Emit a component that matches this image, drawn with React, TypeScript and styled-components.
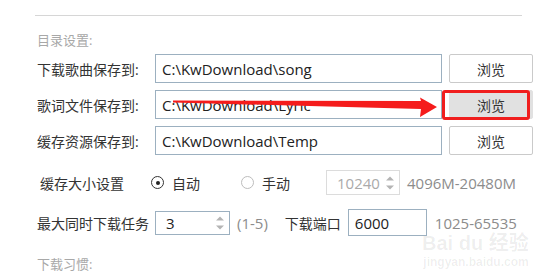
import React from "react";
import styled, { createGlobalStyle } from "styled-components";

const GlobalStyle = createGlobalStyle`
  html, body {
    margin: 0;
    padding: 0;
    background: #ffffff;
  }
  body {
    font-family: "Open Sans", "Noto Sans CJK SC", sans-serif;
    color: #333333;
  }
`;

const Page = styled.div`
  position: relative;
  width: 545px;
  height: 279px;
  overflow: hidden;
  padding-top: 15px;
  box-sizing: border-box;
`;

const Divider = styled.div`
  margin-left: 35px;
  width: 487px;
  height: 1px;
  background: #d6d6d6;
`;

const SectionTitle = styled.div<{ $top: number }>`
  margin: ${(p) => p.$top}px 0 0 37px;
  height: 20px;
  line-height: 20px;
  font-size: 13px;
  color: #a8a8a8;
`;

const Rows = styled.div`
  display: flex;
  flex-direction: column;
  gap: 7px;
  margin: 4px 0 0 37px;
`;

const Row = styled.div<{ $h: number; $top?: number; $indent?: number }>`
  display: flex;
  align-items: center;
  height: ${(p) => p.$h}px;
  margin-top: ${(p) => p.$top ?? 0}px;
  padding-left: ${(p) => p.$indent ?? 0}px;
`;

const Label = styled.span<{ $w?: number; $ml?: number }>`
  width: ${(p) => (p.$w ? `${p.$w}px` : "auto")};
  margin-left: ${(p) => p.$ml ?? 0}px;
  flex-shrink: 0;
  font-size: 14px;
  white-space: nowrap;
  color: #333333;
`;

const PathInput = styled.div`
  box-sizing: border-box;
  width: 287px;
  height: 29px;
  border: 1px solid #9cb0c0;
  padding-left: 6px;
  display: flex;
  align-items: center;
  font-size: 15px;
  color: #222222;
  white-space: nowrap;
`;

const BrowseButton = styled.div<{ $pressed?: boolean }>`
  box-sizing: border-box;
  width: 84px;
  height: 29px;
  margin-left: 7px;
  border: 1px solid ${(p) => (p.$pressed ? "#e1e1e1" : "#cacaca")};
  border-radius: 2px;
  background: ${(p) => (p.$pressed ? "#e1e1e1" : "#ffffff")};
  display: flex;
  align-items: center;
  justify-content: center;
  font-size: 14px;
  color: #333333;
`;

const Radio = styled.span<{ $checked?: boolean }>`
  box-sizing: border-box;
  width: 13px;
  height: 13px;
  border-radius: 50%;
  border: 1px solid ${(p) => (p.$checked ? "#333333" : "#bdbdbd")};
  display: flex;
  align-items: center;
  justify-content: center;
  margin-right: 8px;
  &::after {
    content: "";
    width: 4px;
    height: 4px;
    border-radius: 50%;
    background: ${(p) => (p.$checked ? "#222222" : "transparent")};
  }
`;

const Option = styled.span<{ $w: number }>`
  display: flex;
  align-items: center;
  width: ${(p) => p.$w}px;
  font-size: 14px;
`;

const SpinBox = styled.div<{ $w: number; $h: number; $disabled?: boolean }>`
  box-sizing: border-box;
  position: relative;
  width: ${(p) => p.$w}px;
  height: ${(p) => p.$h}px;
  border: 1px solid ${(p) => (p.$disabled ? "#dcdcdc" : "#9cb0c0")};
  display: flex;
  align-items: center;
  padding-left: 10px;
  font-size: 15px;
  color: ${(p) => (p.$disabled ? "#aaaaaa" : "#222222")};
`;

const Arrows = styled.span`
  position: absolute;
  right: 5px;
  top: 50%;
  transform: translateY(-50%);
  display: flex;
  flex-direction: column;
  gap: 5px;
`;

const Tri = styled.span<{ $down?: boolean }>`
  width: 0;
  height: 0;
  border-left: 4px solid transparent;
  border-right: 4px solid transparent;
  ${(p) =>
    p.$down
      ? "border-top: 4px solid #b4b4b4;"
      : "border-bottom: 4px solid #b4b4b4;"}
`;

const Hint = styled.span<{ $gap: number }>`
  margin-left: ${(p) => p.$gap}px;
  font-size: 15px;
  color: #8c8c8c;
  white-space: nowrap;
`;

const TextBox = styled.div`
  box-sizing: border-box;
  width: 79px;
  height: 27px;
  margin-left: 7px;
  border: 1px solid #9cb0c0;
  padding-left: 6px;
  display: flex;
  align-items: center;
  font-size: 15px;
  color: #222222;
`;

const Highlight = styled.div`
  position: absolute;
  left: 442px;
  top: 90px;
  width: 88px;
  height: 30px;
  box-sizing: border-box;
  border: 3px solid #f01e1e;
  border-radius: 3px;
`;

const Arrow = styled.svg`
  position: absolute;
  left: 0;
  top: 0;
  pointer-events: none;
`;

const Watermark = styled.div`
  position: absolute;
  left: 422px;
  top: 232px;
  display: flex;
  flex-direction: column;
  align-items: flex-end;
  white-space: nowrap;
  color: rgba(0, 0, 0, 0.07);
  font-family: "Liberation Sans", "Noto Sans CJK SC", sans-serif;
  font-weight: bold;
`;

const MarkBig = styled.span`
  font-size: 20px;
  line-height: 22px;
`;

const MarkSmall = styled.span`
  font-size: 12px;
  line-height: 16px;
`;

function SpinArrows() {
  return (
    <Arrows>
      <Tri />
      <Tri $down />
    </Arrows>
  );
}

export default function App() {
  return (
    <Page>
      <GlobalStyle />
      <Divider />
      <SectionTitle $top={14}>目录设置:</SectionTitle>
      <Rows>
        <Row $h={29}>
          <Label $w={118}>下载歌曲保存到:</Label>
          <PathInput>C:\KwDownload\song</PathInput>
          <BrowseButton>浏览</BrowseButton>
        </Row>
        <Row $h={29}>
          <Label $w={118}>歌词文件保存到:</Label>
          <PathInput>C:\KwDownload\Lyric</PathInput>
          <BrowseButton $pressed>浏览</BrowseButton>
        </Row>
        <Row $h={29}>
          <Label $w={118}>缓存资源保存到:</Label>
          <PathInput>C:\KwDownload\Temp</PathInput>
          <BrowseButton>浏览</BrowseButton>
        </Row>
        <Row $h={25} $top={8} $indent={3}>
          <Label $w={111}>缓存大小设置</Label>
          <Option $w={90}>
            <Radio $checked />
            自动
          </Option>
          <Option $w={85}>
            <Radio />
            手动
          </Option>
          <SpinBox $w={74} $h={25} $disabled>
            10240
            <SpinArrows />
          </SpinBox>
          <Hint $gap={7}>4096M-20480M</Hint>
        </Row>
        <Row $h={27} $top={7}>
          <Label $w={118}>最大同时下载任务</Label>
          <SpinBox $w={75} $h={24}>
            3
            <SpinArrows />
          </SpinBox>
          <Hint $gap={7}>(1-5)</Hint>
          <Label $ml={17}>下载端口</Label>
          <TextBox>6000</TextBox>
          <Hint $gap={8}>1025-65535</Hint>
        </Row>
      </Rows>
      <SectionTitle $top={18}>下载习惯:</SectionTitle>
      <Highlight />
      <Arrow width="545" height="279" viewBox="0 0 545 279">
        <polygon points="173,100.5 421,101 420,97.5 437,107 420,117 421,109 173,102.5" fill="#f51c1c" />
      </Arrow>
      <Watermark>
        <MarkBig>Bai du 经验</MarkBig>
        <MarkSmall>jingyan.baidu.com</MarkSmall>
      </Watermark>
    </Page>
  );
}
